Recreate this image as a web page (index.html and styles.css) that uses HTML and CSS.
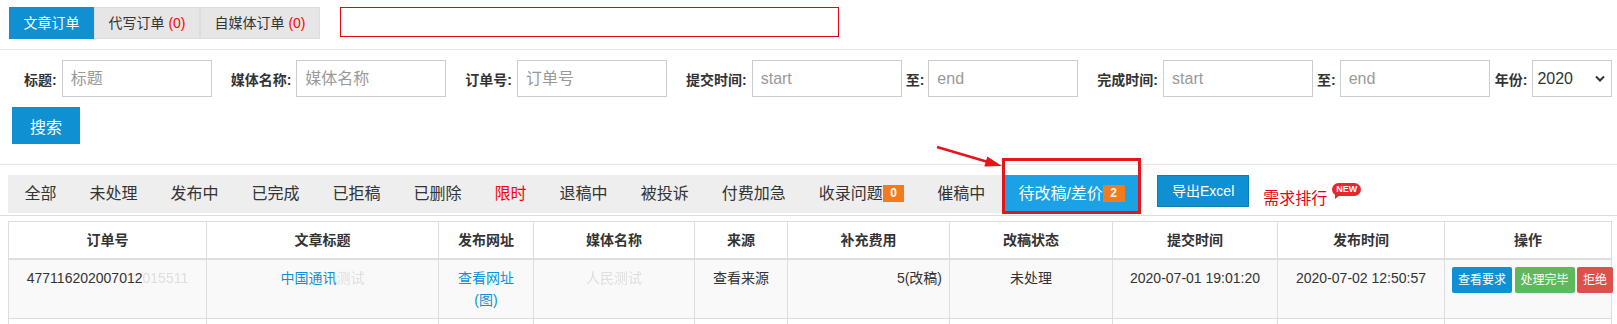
FILE: index.html
```html
<!DOCTYPE html>
<html lang="zh-CN">
<head>
    <meta charset="UTF-8">
    <meta name="viewport" content="width=device-width, initial-scale=1.0">
    <title>文章订单</title>
    <link rel="stylesheet" href="styles.css">
</head>
<body>
    <div class="order-tabs">
        <a class="order-tab active">文章订单</a>
        <a class="order-tab">代写订单 <span class="num">(0)</span></a>
        <a class="order-tab">自媒体订单 <span class="num">(0)</span></a>
        <div class="notice-box"></div>
    </div>

    <form class="search-form">
        <div class="filter-row">
            <label class="field">
                <span class="field-label">标题:</span>
                <input class="input" placeholder="标题">
            </label>
            <label class="field">
                <span class="field-label">媒体名称:</span>
                <input class="input" placeholder="媒体名称">
            </label>
            <label class="field">
                <span class="field-label">订单号:</span>
                <input class="input" placeholder="订单号">
            </label>
            <div class="field">
                <span class="field-label">提交时间:</span>
                <input class="input" placeholder="start">
                <span class="date-to">至:</span>
                <input class="input" placeholder="end">
            </div>
            <div class="field">
                <span class="field-label">完成时间:</span>
                <input class="input" placeholder="start">
                <span class="date-to">至:</span>
                <input class="input" placeholder="end">
            </div>
            <label class="field year">
                <span class="field-label">年份:</span>
                <span class="select-wrap">
                    <select class="select">
                        <option>2020</option>
                        <option>2019</option>
                    </select>
                    <svg class="select-arrow" width="10" height="7" viewBox="0 0 10 7"><path d="M1 1.5l4 4 4-4" fill="none" stroke="#333" stroke-width="2"/></svg>
                </span>
            </label>
        </div>
        <button class="btn-search" type="button">搜索</button>
    </form>

    <div class="status-bar">
        <ul class="status-tabs">
            <li>全部</li>
            <li>未处理</li>
            <li>发布中</li>
            <li>已完成</li>
            <li>已拒稿</li>
            <li>已删除</li>
            <li class="hot">限时</li>
            <li>退稿中</li>
            <li>被投诉</li>
            <li>付费加急</li>
            <li>收录问题<span class="badge">0</span></li>
            <li>催稿中</li>
            <li class="current">待改稿/差价<span class="badge">2</span>
                <span class="mark-box"></span>
                <svg class="mark-arrow" width="68" height="24" viewBox="0 0 68 24">
                    <line x1="1" y1="2" x2="52" y2="17" stroke="#e8141b" stroke-width="2.5"/>
                    <polygon points="66,21 48.3,21.4 51.3,11.6" fill="#e8141b"/>
                </svg>
            </li>
        </ul>
        <a class="btn-export">导出Excel</a>
        <a class="rank"><span class="rank-text">需求排行</span><span class="new-tag">NEW</span></a>
    </div>

    <table class="order-table">
        <colgroup>
            <col class="w-no"><col class="w-title"><col class="w-url"><col class="w-media"><col class="w-src">
            <col class="w-fee"><col class="w-state"><col class="w-time"><col class="w-pub"><col class="w-ops">
        </colgroup>
        <thead>
            <tr>
                <th>订单号</th>
                <th>文章标题</th>
                <th>发布网址</th>
                <th>媒体名称</th>
                <th>来源</th>
                <th>补充费用</th>
                <th>改稿状态</th>
                <th>提交时间</th>
                <th>发布时间</th>
                <th>操作</th>
            </tr>
        </thead>
        <tbody>
            <tr>
                <td>477116202007012<span class="blur">015511</span></td>
                <td><a class="link">中国通讯</a><span class="blur">测试</span></td>
                <td><a class="link">查看网址</a><br><a class="link">(图)</a></td>
                <td><span class="blur">人民测试</span></td>
                <td>查看来源</td>
                <td class="fee">5(改稿)</td>
                <td>未处理</td>
                <td>2020-07-01 19:01:20</td>
                <td>2020-07-02 12:50:57</td>
                <td class="ops">
                    <div class="ops-btns">
                        <a class="btn-xs primary">查看要求</a>
                        <a class="btn-xs success">处理完毕</a>
                        <a class="btn-xs danger">拒绝</a>
                    </div>
                </td>
            </tr>
            <tr class="empty-row">
                <td></td><td></td><td></td><td></td><td></td>
                <td></td><td></td><td></td><td></td><td></td>
            </tr>
        </tbody>
    </table>
</body>
</html>
```

FILE: styles.css
```css
* {
    box-sizing: border-box;
}
body {
    margin: 0;
    font-family: "Liberation Sans", "Noto Sans CJK SC", sans-serif;
    font-size: 14px;
    color: #333;
    background: #fff;
}
a {
    text-decoration: none;
}

/* top order tabs */
.order-tabs {
    display: flex;
    align-items: flex-start;
    height: 50px;
    padding: 7px 9px 0;
    border-bottom: 1px solid #e6e6e6;
}
.order-tab {
    height: 32px;
    line-height: 30px;
    padding: 0 13.5px;
    border: 1px solid #ddd;
    background: #e6e6e6;
    color: #333;
    font-size: 14px;
    white-space: nowrap;
}
.order-tab.active {
    background: #0e90d2;
    border-color: #0e90d2;
    color: #fff;
}
.num {
    color: #f00;
}
.notice-box {
    width: 499px;
    height: 30px;
    margin-left: 20px;
    border: 1px solid #e60012;
}

/* search form */
.search-form {
    padding: 10px 12px 20px;
    border-bottom: 1px solid #e6e6e6;
}
.filter-row {
    display: flex;
    align-items: center;
    padding-left: 12px;
}
.field {
    display: flex;
    align-items: center;
}
.field + .field {
    margin-left: 19px;
}
.field.year {
    margin-left: 5px;
}
.field-label {
    font-weight: bold;
    font-size: 14px;
    margin-right: 5px;
    white-space: nowrap;
}
.input {
    width: 150px;
    height: 37px;
    padding: 0 8px;
    border: 1px solid #ccc;
    font-family: inherit;
    font-size: 16px;
    color: #333;
    outline: none;
}
.input::placeholder {
    color: #999;
}
.date-to {
    font-weight: bold;
    margin: 0 4px;
}
.select-wrap {
    position: relative;
    display: inline-block;
}
.select {
    width: 80px;
    height: 37px;
    padding: 0 4px;
    border: 1px solid #ccc;
    background: #fff;
    font-family: inherit;
    font-size: 16px;
    color: #333;
    appearance: none;
    -webkit-appearance: none;
    border-radius: 0;
}
.select-arrow {
    position: absolute;
    right: 7px;
    top: 15px;
}
.btn-search {
    display: block;
    margin-top: 10px;
    height: 37px;
    padding: 0 17px;
    border: 1px solid #0e90d2;
    background: #0e90d2;
    color: #fff;
    font-family: inherit;
    font-size: 16px;
}

/* status tabs */
.status-bar {
    display: flex;
    align-items: flex-start;
    padding: 10px 8px 2px;
    border-bottom: 1px solid #ddd;
}
.status-tabs {
    display: flex;
    margin: 0;
    padding: 0;
    list-style: none;
    background: #eee;
}
.status-tabs li {
    position: relative;
    height: 38px;
    line-height: 38px;
    padding: 0 16.5px;
    font-size: 16px;
    white-space: nowrap;
}
.status-tabs li.hot {
    color: #f00;
}
.status-tabs li.current {
    background: #1ba1e6;
    color: #fff;
}
.badge {
    display: inline-block;
    height: 17px;
    line-height: 17px;
    padding: 0 7.5px;
    margin-top: -3px;
    vertical-align: middle;
    font-size: 12px;
    font-weight: bold;
    color: #fff;
    background: #f37b1d;
}
.mark-box {
    position: absolute;
    left: 0;
    right: 0;
    top: -17px;
    bottom: -1px;
    border: 3px solid #e8141b;
}
.mark-arrow {
    position: absolute;
    left: -66px;
    top: -30px;
    overflow: visible;
}
.btn-export {
    margin-left: 16px;
    height: 32px;
    line-height: 30px;
    padding: 0 14px;
    border: 1px solid #0c7cb5;
    background: #0e90d2;
    color: #fff;
    font-size: 14px;
    white-space: nowrap;
}
.rank {
    display: flex;
    align-items: flex-start;
    margin: 8px 0 0 14px;
    color: #e60012;
}
.rank-text {
    margin-top: 5px;
    font-size: 16px;
    line-height: 22px;
}
.new-tag {
    position: relative;
    margin-left: 5px;
    height: 13px;
    line-height: 13px;
    padding: 0 4px;
    border-radius: 7px;
    background: #e8262b;
    color: #fff;
    font-size: 9px;
    font-weight: bold;
}
.new-tag::after {
    content: "";
    position: absolute;
    left: 3px;
    bottom: -3px;
    border-left: 5px solid #e8262b;
    border-bottom: 4px solid transparent;
}

/* table */
.order-table {
    width: 1603px;
    margin: 5px 8px 0;
    border-collapse: collapse;
    table-layout: fixed;
    border: 1px solid #ddd;
}
.w-no { width: 198px; }
.w-title { width: 232px; }
.w-url { width: 95px; }
.w-media { width: 161px; }
.w-src { width: 93px; }
.w-fee { width: 162px; }
.w-state { width: 163px; }
.w-time { width: 165px; }
.w-pub { width: 167px; }
.w-ops { width: 167px; }
.order-table th,
.order-table td {
    padding: 7px;
    border: 1px solid #ddd;
    line-height: 22px;
    font-size: 14px;
    text-align: center;
    vertical-align: top;
}
.order-table th {
    font-weight: bold;
    border-bottom: 2px solid #ddd;
    vertical-align: middle;
}
.order-table tbody tr:nth-child(odd) td {
    background: #f9f9f9;
}
.order-table .empty-row td {
    height: 37px;
}
.order-table td.fee {
    text-align: right;
}
.order-table td.ops {
    text-align: left;
    white-space: nowrap;
}
.link {
    color: #0e90d2;
}
.blur {
    color: #dedede;
    filter: blur(0.7px);
}
.ops-btns {
    display: flex;
    gap: 2.5px;
}
.btn-xs {
    display: inline-block;
    height: 26px;
    line-height: 26px;
    padding: 0 6px;
    border-radius: 2px;
    font-size: 12px;
    color: #fff;
    white-space: nowrap;
}
.btn-xs.primary { background: #0e90d2; }
.btn-xs.success { background: #5eb95e; }
.btn-xs.danger { background: #dd514c; }
```
